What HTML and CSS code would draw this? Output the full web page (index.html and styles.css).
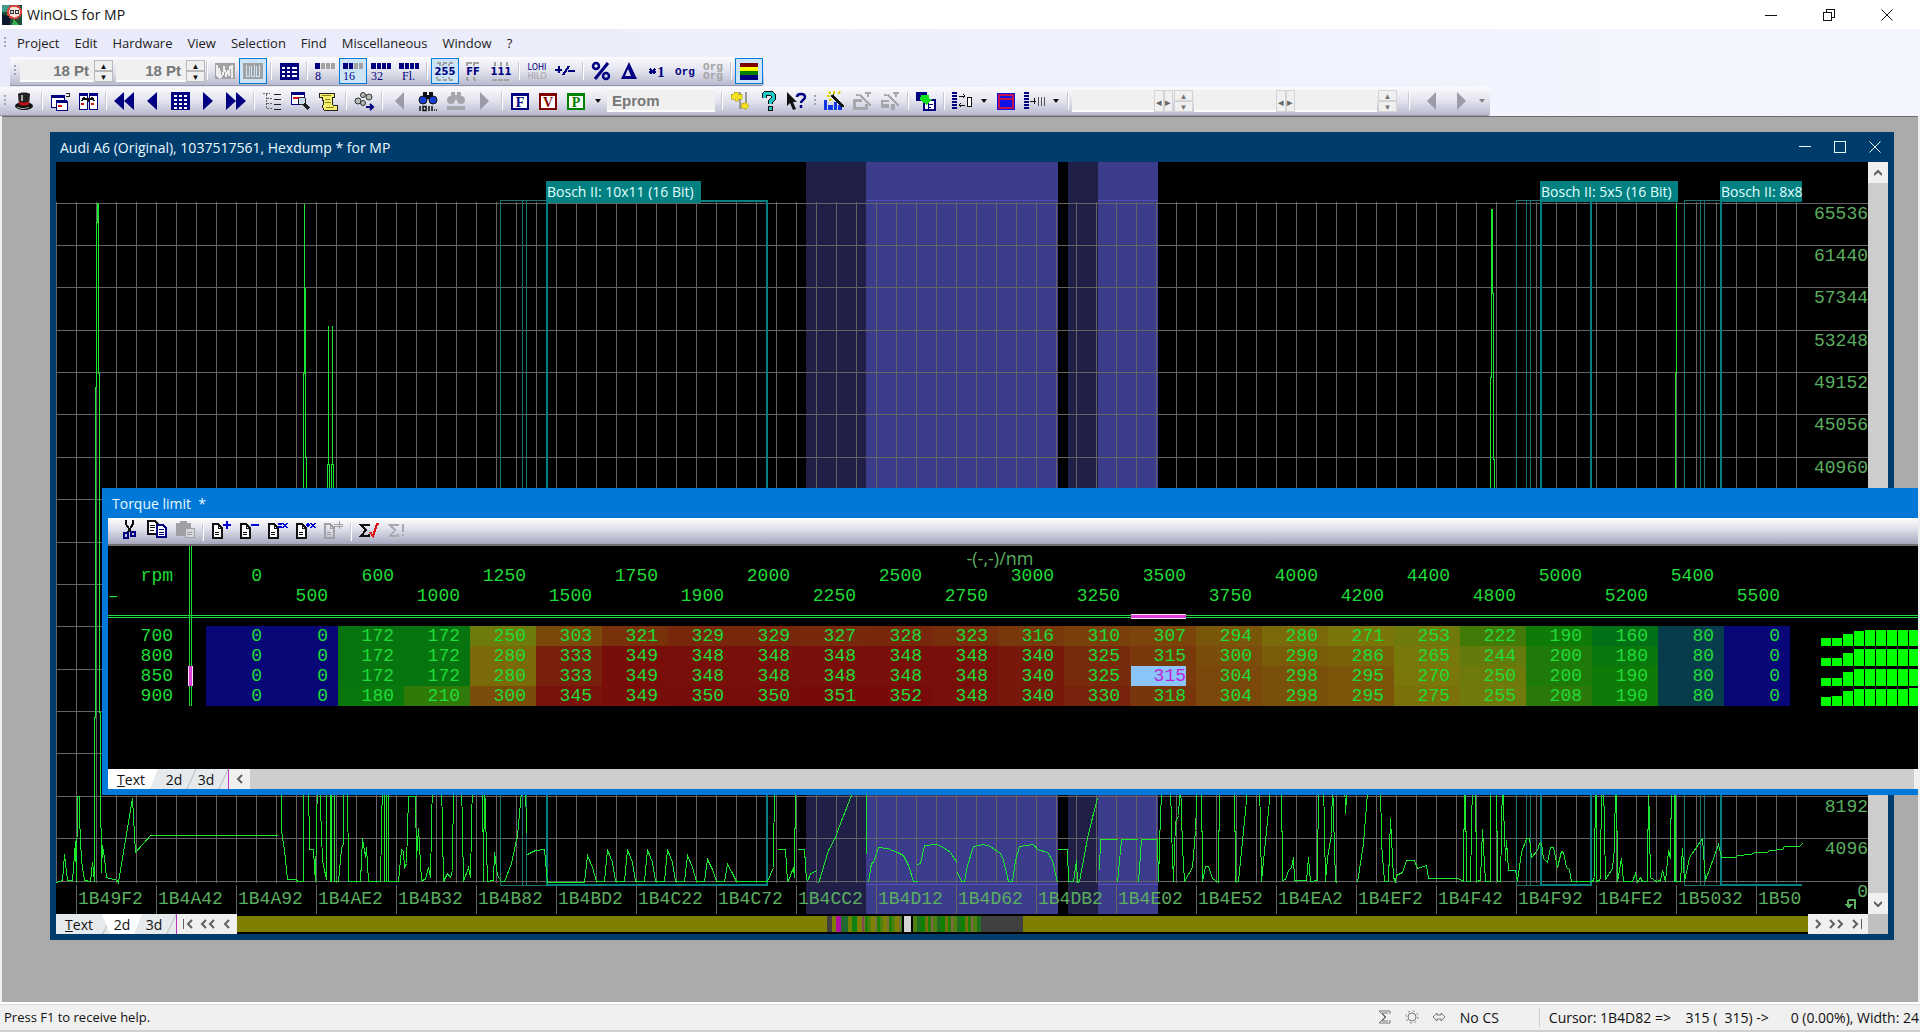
FILE: index.html
```html
<!DOCTYPE html>
<html lang="en">

<head>
    <meta charset="UTF-8">
    <meta name="viewport" content="width=device-width, initial-scale=1.0">
    <title>WinOLS for MP</title>
    <link rel="stylesheet" href="styles.css">
</head>

<body>
    <header class="titlebar">
        <svg class="appicon" viewBox="0 0 20 20">
            <rect width="20" height="20" fill="#1d4f38" />
            <path d="M0 0h8v7H0z" fill="#3f9c8c" />
            <path d="M0 9l8 3v8H0z" fill="#0b1630" />
            <path d="M12 14l5 6h-7z" fill="#39b04a" />
            <circle cx="12.500" cy="7" r="6.500" fill="#f4e4e2" stroke="#d8453e" stroke-width="2" />
            <circle cx="10" cy="7" r="2" fill="none" stroke="#333" />
            <circle cx="15" cy="7" r="2" fill="none" stroke="#333" />
        </svg>
        <h1>WinOLS for MP</h1>
        <div class="winbtns">
            <button aria-label="Minimize"><svg viewBox="0 0 12 12"><path d="M0 6.500h12" /></svg></button>
            <button aria-label="Restore"><svg viewBox="0 0 12 12"><path d="M.5 3.500h8v8h-8zM3.500 3V.5h8v8H9" /></svg></button>
            <button aria-label="Close"><svg class="smooth" viewBox="0 0 12 12"><path d="M.5.5l11 11M11.500.5l-11 11" /></svg></button>
        </div>
    </header>

    <div class="bars">
        <nav class="menu">
            <span class="grip"></span>
            <a href="#">Project</a>
            <a href="#">Edit</a>
            <a href="#">Hardware</a>
            <a href="#">View</a>
            <a href="#">Selection</a>
            <a href="#">Find</a>
            <a href="#">Miscellaneous</a>
            <a href="#">Window</a>
            <a href="#">?</a>
        </nav>

        <div class="toolbar toolbar_view">
            <span class="grip"></span>
            <input class="field pt" type="text" value="18 Pt" aria-label="Font size">
            <span class="spin"><button aria-label="Up">▲</button><button aria-label="Down">▼</button></span>
            <input class="field pt" type="text" value="18 Pt" aria-label="Row size">
            <span class="spin"><button aria-label="Up">▲</button><button aria-label="Down">▼</button></span>
            <i class="sep"></i>
            <button class="tool" aria-label="Wave"><svg viewBox="0 0 20 20"><path d="M0 2h20v16H0z" fill="#a2a2a2" /><path d="M2 4v10l2 2V7l2 9 2-3 1-8 2 10 2-6 1 6 1-9 2-1v12" fill="none" stroke="#eee" stroke-width="1.500" /></svg></button>
            <button class="tool on" aria-label="Bars"><svg viewBox="0 0 20 20"><path d="M0 2h20v16H0z" fill="#a2a2a2" /><path d="M3 4v11h3V5M8 5v10h3V4M13 5v10h3V4" fill="none" stroke="#cce4f7" /></svg></button>
            <i class="sep"></i>
            <button class="tool" aria-label="Table"><svg viewBox="0 0 20 20"><path d="M1 2h19v17H1z" fill="#000080" /><path d="M3 6h3v2H3zm5 0h3v2H8zm5 0h5v2h-5zM3 10h3v2H3zm5 0h3v2H8zm5 0h5v2h-5zM3 14h3v2H3zm5 0h3v2H8zm5 0h5v2h-5z" fill="#fff" /></svg></button>
            <i class="sep"></i>
            <button class="tool" aria-label="8 bit"><svg viewBox="0 0 20 20"><path d="M0 2h5v6H0z" fill="#000080" /><path d="M6 2h4v6H6zm5 0h4v6h-4zm5 0h4v6h-4z" fill="#a2a2a2" /><text x="0" y="19" class="num">8</text></svg></button>
            <button class="tool on" aria-label="16 bit"><svg viewBox="0 0 20 20"><path d="M0 2h5v6H0zm6 0h4v6H6z" fill="#000080" /><path d="M11 2h4v6h-4zm5 0h4v6h-4z" fill="#a2a2a2" /><text x="0" y="19" class="num">16</text></svg></button>
            <button class="tool" aria-label="32 bit"><svg viewBox="0 0 20 20"><path d="M0 2h5v6H0zm6 0h4v6H6zm5 0h4v6h-4zm5 0h4v6h-4z" fill="#000080" /><text x="0" y="19" class="num">32</text></svg></button>
            <button class="tool" aria-label="Float"><svg viewBox="0 0 20 20"><path d="M0 2h5v6H0zm6 0h4v6H6zm5 0h4v6h-4zm5 0h4v6h-4z" fill="#000080" /><text x="3" y="19" class="num">Fl.</text></svg></button>
            <i class="sep"></i>
            <button class="tool on" aria-label="Decimal"><svg viewBox="0 0 20 20"><path d="M2 1.500h4M8 1.500h4M14 1.500h4M2 18.500h4M8 18.500h4M14 18.500h4M5 3v2M8 3v2M14 3v2M2 16v2M8 16v1M14 16v2" stroke="#a2a2a2" stroke-width="2" /><text x="10" y="14" class="big">255</text></svg></button>
            <button class="tool" aria-label="Hexadecimal"><svg viewBox="0 0 20 20"><path d="M4 1.500h5M11 1.500h5M4 18.500h2M11 18.500h2M4 1v4M11 1v4M4 16v3M11 16v3" stroke="#a2a2a2" stroke-width="2" /><text x="10" y="14" class="big">FF</text></svg></button>
            <button class="tool" aria-label="Binary"><svg viewBox="0 0 20 20"><path d="M4 1v4M10 1v4M16 1v4M1 18.500h5M7 18.500h5M13 18.500h5" stroke="#a2a2a2" stroke-width="2" /><text x="10" y="14" class="big">111</text></svg></button>
            <i class="sep"></i>
            <button class="tool" aria-label="Byte order"><svg viewBox="0 0 20 20"><text x="10" y="9" class="tiny">LOHI</text><text x="10" y="18" class="tiny off">HILO</text></svg></button>
            <button class="tool" aria-label="Sign"><svg viewBox="0 0 20 20"><path d="M0 9h7M3.500 5v7M8 14l6-9M13 9.500h7" stroke="#000080" stroke-width="2" /></svg></button>
            <i class="sep"></i>
            <button class="tool" aria-label="Percent"><svg class="smooth" viewBox="0 0 20 20"><path d="M4 18L17 2" stroke="#000080" stroke-width="3" /><circle cx="5" cy="5" r="3" fill="none" stroke="#000080" stroke-width="2.500" /><circle cx="15" cy="15" r="3" fill="none" stroke="#000080" stroke-width="2.500" /></svg></button>
            <button class="tool" aria-label="Difference"><svg class="smooth" viewBox="0 0 20 20"><path d="M10 1l8 17H2zM9 8l-3 7h6z" fill="#000080" fill-rule="evenodd" /></svg></button>
            <button class="tool" aria-label="Factor"><svg viewBox="0 0 20 20"><path d="M3 8l5 5M8 8l-5 5M2 10.500h7" stroke="#000080" stroke-width="2" /><text x="14" y="16" class="one">1</text></svg></button>
            <button class="tool" aria-label="Original"><svg viewBox="0 0 20 20"><text x="10" y="14" class="org">Org</text></svg></button>
            <button class="tool" aria-label="Original compare"><svg viewBox="0 0 20 20"><text x="10" y="9" class="org off">Org</text><text x="10" y="18" class="org off">Org</text></svg></button>
            <i class="sep"></i>
            <button class="tool on" aria-label="Colors"><svg viewBox="0 0 20 20"><path d="M1 2h18v4H1z" fill="#800000" /><path d="M1 6h18v4H1z" fill="#ff0" /><path d="M1 10h18v4H1z" fill="#008000" /><path d="M1 14h18v5H1z" fill="#000080" /></svg></button>
        </div>

        <div class="toolbar toolbar_main">
            <span class="grip"></span>
            <button class="tool" aria-label="Project"><svg class="smooth" viewBox="0 0 20 20"><ellipse cx="10" cy="15" rx="9" ry="4" fill="#111" /><path d="M4 3c2-2 10-2 12 0l-1 11H5z" fill="#222" /><path d="M5 10c3 2 7 2 10 0v3c-3 2-7 2-10 0z" fill="#c01010" /><path d="M7 4h2v6H7z" fill="#aaa" /><path d="M3 16c4 2 8 2 12 0" fill="none" stroke="#aaa" /></svg></button>
            <i class="sep"></i>
            <button class="tool" aria-label="New window"><svg viewBox="0 0 20 20"><path d="M1 5h13v11H1z" fill="#fff" stroke="#000080" /><path d="M1 4h14v3H1z" fill="#000080" /><path d="M6 10h11v9H6z" fill="#fff" stroke="#000080" /><path d="M6 9h11v3H6z" fill="#000080" /><path d="M8 14h4v2H8z" fill="#e01010" /><path d="M16 2h3v3h-3" fill="none" stroke="#222" /></svg></button>
            <button class="tool" aria-label="Tile windows"><svg viewBox="0 0 20 20"><path d="M1 3h8v15H1zM11 3h8v15h-8z" fill="#fff" stroke="#000080" /><path d="M1 2h9v3H1zM11 2h9v3h-9z" fill="#000080" /><path d="M5 8h10M6 6l-2 4M14 6l2 4M10 8v3" stroke="#111" stroke-width="2" /><path d="M3 12h3v2H3zM13 12h3v2h-3z" fill="#e01010" /></svg></button>
            <i class="sep"></i>
            <button class="tool" aria-label="First"><svg class="smooth" viewBox="0 0 20 20"><path d="M10 1v18L0 10zM20 1v18L10 10z" fill="#000080" /></svg></button>
            <button class="tool" aria-label="Previous"><svg class="smooth" viewBox="0 0 20 20"><path d="M15 1v18L5 10z" fill="#000080" /></svg></button>
            <button class="tool" aria-label="List"><svg viewBox="0 0 20 20"><path d="M1 1h19v18H1z" fill="#000080" /><path d="M4 4h3v2H4zm5 0h3v2H9zm5 0h3v2h-3zM4 8h3v2H4zm5 0h3v2H9zm5 0h3v2h-3zM4 12h3v2H4zm5 0h3v2H9zm5 0h3v2h-3zM4 16h3v2H4zm5 0h3v2H9zm5 0h3v2h-3z" fill="#fff" /></svg></button>
            <button class="tool" aria-label="Next"><svg class="smooth" viewBox="0 0 20 20"><path d="M5 1v18l10-9z" fill="#000080" /></svg></button>
            <button class="tool" aria-label="Last"><svg class="smooth" viewBox="0 0 20 20"><path d="M0 1v18l10-9zM10 1v18l10-9z" fill="#000080" /></svg></button>
            <i class="sep"></i>
            <button class="tool" aria-label="Tree"><svg viewBox="0 0 20 20"><path d="M1 2.500h7M4.500 3v15M5 7.500h5M5 12.500h5M5 17.500h5" fill="none" stroke="#666" stroke-dasharray="2 1" /><path d="M12 3.500h7M12 8.500h7M12 13.500h7M12 18.500h7" stroke="#222" stroke-width="1.500" /></svg></button>
            <button class="tool" aria-label="Preview"><svg viewBox="0 0 20 20"><path d="M1 2h13v11H1z" fill="#fff" stroke="#000080" /><path d="M1 1h14v3H1z" fill="#000080" /><path d="M3 6h6v2H3z" fill="#e01010" /><circle cx="12" cy="10" r="4" fill="#cde" stroke="#222" /><path d="M14 13l5 5" stroke="#222" stroke-width="3" /></svg></button>
            <button class="tool" aria-label="Log"><svg viewBox="0 0 20 20"><path d="M1 2h15v4h-2l1 8h4v5H6l-2-4 2-2-2-7H1z" fill="#f4ec6a" stroke="#222" /><path d="M7 8h5M7 11h6M4 4h9M8 16h8" stroke="#8a8420" /></svg></button>
            <i class="sep"></i>
            <button class="tool" aria-label="Connect"><svg class="smooth" viewBox="0 0 20 20"><g fill="#b4bcb4" stroke="#333"><circle cx="4" cy="10" r="3" /><circle cx="9" cy="4" r="2.500" /><circle cx="9" cy="12" r="2.500" /><circle cx="15" cy="6" r="3" /></g><path d="M12 16h7M16 13l3 3-3 3" fill="none" stroke="#000080" stroke-width="2" /></svg></button>
            <i class="sep"></i>
            <button class="tool" aria-label="Find previous"><svg class="smooth" viewBox="0 0 20 20"><path d="M14 1v18L5 10z" fill="#9c9ca8" /></svg></button>
            <button class="tool" aria-label="Find text"><svg class="smooth" viewBox="0 0 20 20"><path d="M5 1h4v6H5zM11 1h4v6h-4zM8 4h4v4H8z" fill="#111" /><circle cx="5" cy="9" r="4" fill="#1840d8" stroke="#111" /><circle cx="15" cy="9" r="4" fill="#1840d8" stroke="#111" /><path d="M2 15v5M5 15.500h3v4H5zM11 15v5M14 15v5M16 19h1M18 19h1" stroke="#111" fill="none" stroke-width="1.500" /></svg></button>
            <button class="tool" aria-label="Find map"><svg class="smooth" viewBox="0 0 20 20"><path d="M5 1h4v6H5zM11 1h4v6h-4zM8 4h4v5H8zM1 15h18v4H1z" fill="#a6a6ae" /><circle cx="5" cy="9" r="4" fill="#a6a6ae" /><circle cx="15" cy="9" r="4" fill="#a6a6ae" /></svg></button>
            <button class="tool" aria-label="Find next"><svg class="smooth" viewBox="0 0 20 20"><path d="M6 1v18l9-9z" fill="#9c9ca8" /></svg></button>
            <i class="sep"></i>
            <button class="tool" aria-label="F window"><svg viewBox="0 0 20 20"><path d="M1 2h18v17H1z" fill="#000080" /><path d="M3 5h14v12H3z" fill="#fff" /><text x="10" y="16" class="let">F</text></svg></button>
            <button class="tool" aria-label="V window"><svg viewBox="0 0 20 20"><path d="M1 2h18v17H1z" fill="#800000" /><path d="M3 5h14v12H3z" fill="#fff" /><text x="10" y="16" class="let red">V</text></svg></button>
            <button class="tool" aria-label="P window"><svg viewBox="0 0 20 20"><path d="M1 2h18v17H1z" fill="#008000" /><path d="M3 5h14v12H3z" fill="#fff" /><text x="10" y="16" class="let green">P</text></svg></button>
            <button class="drop" aria-label="More"></button>
            <input class="field eprom" type="text" value="Eprom" aria-label="Element">
            <i class="sep"></i>
            <button class="tool" aria-label="Transfer"><svg viewBox="0 0 20 20"><path d="M10 1v17M16 1v17" stroke="#999" stroke-width="2" /><path d="M1 3h3V1h4v2h4v5H8v2H5V8H1zM12 12h3v-2l4 5-4 4v-2h-4z" fill="#f4e020" stroke="#9a9000" stroke-width=".5" /></svg></button>
            <button class="tool" aria-label="Help"><svg viewBox="0 0 20 20"><path d="M6 7V4l2-2h5l2 2v4l-3 3v2" fill="none" stroke="#111" stroke-width="5" /><path d="M6 7V4l2-2h5l2 2v4l-3 3v2" fill="none" stroke="#20c8c8" stroke-width="3" /><path d="M10 15h4v4h-4z" fill="#20c8c8" stroke="#111" /></svg></button>
            <button class="tool" aria-label="Context help"><svg class="smooth" viewBox="0 0 20 20"><path d="M1 1l10 10H7l3 7-3 1-3-7-3 3z" fill="#111" /><path d="M11 6c0-4 8-4 8 0 0 3-4 3-4 6M15 14v3" fill="none" stroke="#000080" stroke-width="2.500" /></svg></button>
            <span class="grip"></span>
            <button class="tool" aria-label="Map wizard"><svg viewBox="0 0 20 20"><path d="M0 9h3v10H0zM4 14h5v5H4zM10 11h3v8h-3zM14 14h4v5h-4z" fill="#1038e8" /><path d="M8 4l11 12" stroke="#111" stroke-width="3" /><path d="M5 1l2 2M10 0v3M3 5h3M14 3l2-2M7 8l-2 2" stroke="#e0d000" stroke-width="2" /></svg></button>
            <button class="tool" aria-label="Wizard 2"><svg viewBox="0 0 20 20"><path d="M1 8h9v3H4v5h9v-3h3v6H1z" fill="#a6a6ae" /><path d="M8 4l11 11M13 2h6M16 1v5M4 4h3" stroke="#a6a6ae" stroke-width="2" /></svg></button>
            <button class="tool" aria-label="Wizard 3"><svg viewBox="0 0 20 20"><path d="M1 9h8v2H3v2h6v4H1zM11 13h4v6h-4z" fill="#a6a6ae" /><path d="M8 4l11 11M13 2h6M16 1v5M4 4h3" stroke="#a6a6ae" stroke-width="2" /></svg></button>
            <i class="sep"></i>
            <button class="tool" aria-label="Copy map"><svg viewBox="0 0 20 20"><path d="M0 1h11v9H0z" fill="#000080" /><path d="M8 9h11v10H8z" fill="#fff" stroke="#000080" stroke-width="2" /><path d="M5 4h8v4h3l-5 6-7-5z" fill="#10e020" /><path d="M12 13h5M12 16h3M12 12v6" stroke="#000080" /></svg></button>
            <i class="sep"></i>
            <button class="tool" aria-label="Signature"><svg viewBox="0 0 20 20"><path d="M2.500 1v18" stroke="#000080" stroke-width="5" stroke-dasharray="2 1" /><path d="M7 5h6M11 3l2 2-2 2M7 14h6M9 12l-2 2 2 2" fill="none" stroke="#111" /><path d="M15 6h4v9h-4z" fill="#fff" stroke="#111" /></svg></button>
            <button class="drop" aria-label="More"></button>
            <button class="tool" aria-label="Frame"><svg viewBox="0 0 20 20"><path d="M1 2h18v17H1z" fill="#1010e8" /><path d="M3 4h14v13H3zM3 8h14" fill="none" stroke="#c01050" stroke-width="1.500" /></svg></button>
            <button class="tool" aria-label="Columns"><svg viewBox="0 0 20 20"><path d="M2.500 1v18" stroke="#000080" stroke-width="5" stroke-dasharray="2 1" /><path d="M6 10h6M10 7v6" stroke="#111" /><path d="M14 6v9M17 6v9M20 6v9" stroke="#555" /></svg></button>
            <button class="drop" aria-label="More"></button>
            <i class="sep"></i>
            <input class="field plain" type="text" aria-label="Value 1">
            <span class="pair"><button aria-label="Left">◂</button><button aria-label="Right">▸</button></span>
            <span class="spin grey"><button aria-label="Up">▲</button><button aria-label="Down">▼</button></span>
            <input class="field plain" type="text" aria-label="Value 2">
            <span class="pair"><button aria-label="Left">◂</button><button aria-label="Right">▸</button></span>
            <input class="field plain" type="text" aria-label="Value 3">
            <span class="spin grey"><button aria-label="Up">▲</button><button aria-label="Down">▼</button></span>
            <i class="sep wide"></i>
            <button class="tool" aria-label="Back"><svg class="smooth" viewBox="0 0 20 20"><path d="M14 1v18L5 10z" fill="#9c9ca8" /></svg></button>
            <button class="tool" aria-label="Forward"><svg class="smooth" viewBox="0 0 20 20"><path d="M7 1v18l9-9z" fill="#9c9ca8" /></svg></button>
            <button class="drop grey" aria-label="More"></button>
        </div>
    </div>

    <main class="workspace">
        <!-- hexdump 2d window -->
        <section class="win win_hex">
            <div class="win_title">
                <h2>Audi A6 (Original), 1037517561, Hexdump * for MP</h2>
                <div class="winbtns">
                    <button aria-label="Minimize"><svg viewBox="0 0 12 12"><path d="M0 5.500h12" /></svg></button>
                    <button aria-label="Maximize"><svg viewBox="0 0 12 12"><path d="M.5.5h11v11H.5z" /></svg></button>
                    <button aria-label="Close"><svg class="smooth" viewBox="0 0 12 12"><path d="M.5.5l11 11M11.500.5l-11 11" /></svg></button>
                </div>
            </div>
            <div class="hex_body">
                <div class="chart">
                    <svg class="plot" viewBox="56 162 1812 752">
                        <path class="band_dim" d="M806 162h60v752h-60zM1068 162h30v752h-30z" />
                        <path class="band" d="M866 162h192v752h-192zM1098 162h60v752h-60z" />
                        <path class="band_line" d="M866 200.500h192M1098 200.500h60M866 884.500h192M1098 884.500h60" />
                        <g class="grid"></g>
                        <path class="map_thin" d="M546 200.500H500.500V885.500H546M522.500 200V885M526.500 200V885M1540 200.500H1516.500V885.500H1540M1526.500 200V885M1530.500 200V885M1720 200.500H1684.500V885.500H1720M1700.500 200V885M1704.500 200V885" />
                        <path class="map_thick" d="M547 201H767V885H547zM1541 201H1591V885H1541zM1802 201H1721V885H1802" />
                        <g transform="translate(.5 .5)">
                            <path class="trace" d="M56 882L62 880 64 854 67 880H72L75 841 76 881 77 796H79V817L81 860 84 880 90 881 92 862 94 881V717H95V387H96V222H97V203H98V373H99V712H100V780L101 872 102 845 104 858 106 877 117 880 118 882 132 798 135 852 150 835H277
M281 780V830L284 850 287 879H296L297 881H303V373H304V203M304 288H305V457H306V780M308 780L309 849H313L314 867 315 881 317 780M319 780L322 860 326 879V780M330 780V881H331V780M334 780V881H338L341 848 343 843V780M347 780L348 881H360L362 838 365 857 366 847 368 881H380L382 780M384 780V881H386V780M388 780V881H398L401 849 403 851 404 867 406 863 408 796H415L416 858 418 828 421 880 425 879 428 867 430 877 432 780M441 780L443 881 447 873 450 877 452 870 453 780M461 780L463 881 468 867 470 877 472 780M482 780L483 881 484 780 487 881 493 880 494 852 497 875 501 881H504L511 863 517 835 522 780M525 780L526 833M527 854L535 850 544 849 546 872 547 882H584L587 855 592 867 596 881H604L607 849 612 862 615 881H624L627 849 632 862 635 881H644L647 849 652 862 655 881H664L667 849 672 862 675 881H684L687 855 692 867 696 881H704L707 859 712 869 716 881H724L727 864 732 873 736 881H767L773 867 774 780M777 849H785L787 881 789 878 793 867 794 877 795 780M797 849H804L806 880M807 881L810 873 817 870M818 883L828 850 835 837 838 828 851 795M866 780V853M868 882L871 863 873 862 878 847 887 848 897 852 903 855 908 865 913 881H917M917 864L920 863 924 845 936 844 943 847 950 852 957 863M957 872L961 881H964L967 865 973 846 983 844 990 846 1000 853 1003 860 1008 881H1012L1015 860 1019 846 1033 844 1037 849 1047 852 1052 860 1057 882M1057 849H1067L1068 881H1073L1076 860 1077 882 1079 881 1087 838 1092 817 1097 798M1099 870L1100 839H1117M1117 882L1121 839H1137M1138 882L1141 839H1157L1158 881 1160 813 1162 780M1170 780L1171 830 1173 881 1175 822 1178 815 1180 780 1182 847 1184 881 1192 867 1195 830 1197 780M1201 780L1202 881 1205 866H1208L1212 878 1218 882 1219 780M1234 780L1235 881H1238L1248 780M1259 780L1261 881 1271 780M1281 780L1282 880 1285 879 1288 870 1291 867 1293 857 1294 880H1306L1308 857 1310 881 1317 880 1318 780M1323 780L1325 881 1327 858 1331 833 1332 780 1335 881 1337 882M1344 780L1345 813 1347 780M1357 882L1363 843 1368 780M1380 780L1381 843 1384 881H1388L1390 818 1393 877 1395 881 1396 875 1402 872 1406 860H1414L1417 868 1426 865 1428 878H1458L1463 881 1464 780M1465 780L1466 881H1470L1472 780M1475 780L1476 881 1480 880 1482 829 1485 881H1490V377H1491V209H1492V293H1493V459H1494V780M1496 780L1497 881H1500L1502 780 1505 860 1506 840 1508 870H1515L1517 881 1518 873 1521 852 1526 838H1529L1531 857 1537 850 1539 843H1541L1543 858 1547 862 1550 847H1553L1557 867 1561 851 1563 852 1566 867 1569 869 1571 881H1592L1594 877 1595 780M1596 780V881L1600 879 1601 780M1603 780L1605 879 1612 868 1614 847 1615 780M1616 780L1617 881 1621 858 1623 881H1632L1635 873 1637 882 1640 877 1642 881H1647L1648 780 1650 877 1656 881 1660 880 1662 870 1665 881 1668 850 1670 858 1671 780M1674 780V881H1675V373H1676V203M1675 881H1680L1682 848 1684 881 1687 867 1689 857 1702 838 1705 880 1718 844 1721 857H1735L1737 855 1751 854 1754 852H1767L1769 850 1782 849 1784 846H1799L1802 843" />
                            <path class="trace" d="M327 490V464H328V325M328 464H329V490M331 490V464H332V325M332 464H333V490" />
                        </g>
                        <path class="map_label" d="M546 181h155v22H546zM1540 181h138v21h-138zM1720 181h82v21h-82z" />
                        <text class="map_text" x="547" y="197">Bosch II: 10x11 (16 Bit)</text>
                        <text class="map_text" x="1541" y="197">Bosch II: 5x5 (16 Bit)</text>
                        <text class="map_text" x="1721" y="197">Bosch II: 8x8</text>
                        <g class="axis"></g>
                        <path class="loop" d="M1848 900h7v9M1848 900v7" />
                        <path class="loop_head" d="M1844 904h9l-4 5z" />
                    </svg>
                </div>
                <div class="vscroll">
                    <button aria-label="Scroll up"><svg viewBox="0 0 8 8"><path d="M0 6l4-4 4 4" /></svg></button>
                    <button aria-label="Scroll down"><svg viewBox="0 0 8 8"><path d="M0 2l4 4 4-4" /></svg></button>
                </div>
            </div>
            <div class="foot">
                <div class="tabs">
                    <button class="tab first"><u>T</u>ext</button>
                    <button class="tab mid active">2d</button>
                    <button class="tab">3d</button>
                </div>
                <div class="jump left">
                    <button aria-label="Start"><svg viewBox="0 0 11 10"><path class="bar" d="M.5 0v10" /><path d="M9 1L5 5l4 4" /></svg></button>
                    <button aria-label="Page back"><svg viewBox="0 0 16 10"><path d="M6 1L2 5l4 4M14 1l-4 4 4 4" /></svg></button>
                    <button aria-label="Back"><svg viewBox="0 0 8 10"><path d="M6 1L2 5l4 4" /></svg></button>
                </div>
                <div class="overview">
                    <i class="olive o1"></i><i class="dark d1"></i><i class="code c1"></i><i class="thumb"></i><i class="code c2"></i><i class="dark d2"></i><i class="olive o2"></i>
                </div>
                <div class="jump right">
                    <button aria-label="Forward"><svg viewBox="0 0 8 10"><path d="M2 1l4 4-4 4" /></svg></button>
                    <button aria-label="Page forward"><svg viewBox="0 0 16 10"><path d="M2 1l4 4-4 4M10 1l4 4-4 4" /></svg></button>
                    <button aria-label="End"><svg viewBox="0 0 11 10"><path class="bar" d="M10.500 0v10" /><path d="M2 1l4 4-4 4" /></svg></button>
                </div>
                <span class="corner"></span>
            </div>
        </section>

        <!-- torque limit map window -->
        <section class="win win_map">
            <div class="win_title">
                <h2>Torque limit&nbsp; *</h2>
            </div>
            <div class="map_tools">
                <button class="tool" aria-label="Cut"><svg viewBox="0 0 20 20"><path d="M7 0v4l5 8M14 0v4L9 12" fill="none" stroke="#111" stroke-width="2" /><path d="M5 13h4v5H5zM12 12h4v4h-4z" fill="none" stroke="#000080" stroke-width="1.500" /></svg></button>
                <button class="tool" aria-label="Copy"><svg viewBox="0 0 20 20"><path d="M1 1h7l3 3v10H1z" fill="#fff" stroke="#111" stroke-width="1.500" /><path d="M3 5h5M3 7h5M3 10h4" stroke="#111" /><path d="M10 5h6l3 3v9h-9z" fill="#fff" stroke="#000080" stroke-width="1.500" /><path d="M12 9h5M12 12h5M12 14h5" stroke="#000080" /></svg></button>
                <button class="tool" aria-label="Paste"><svg viewBox="0 0 20 20"><path d="M1 3h4V1h7v2h4v13H1z" fill="#a0a0a4" /><path d="M10 8h9v9h-9z" fill="#d8d8dc" stroke="#a0a0a4" /><path d="M12 12h5M12 14h5" stroke="#a0a0a4" /></svg></button>
                <i class="sep"></i>
                <button class="tool" aria-label="Add"><svg viewBox="0 0 20 20"><path d="M2 4h5l4 4v10H2z" fill="#fff" stroke="#111" stroke-width="1.500" /><path d="M7 4v4h4M4 12h4M4 14h4" fill="none" stroke="#111" /><path d="M12 5h8M16 1v8" stroke="#0000d8" stroke-width="2" /></svg></button>
                <button class="tool" aria-label="Subtract"><svg viewBox="0 0 20 20"><path d="M2 4h5l4 4v10H2z" fill="#fff" stroke="#111" stroke-width="1.500" /><path d="M7 4v4h4M4 12h4M4 14h4" fill="none" stroke="#111" /><path d="M12 5h8" stroke="#0000d8" stroke-width="2" /></svg></button>
                <button class="tool" aria-label="Set"><svg viewBox="0 0 20 20"><path d="M2 4h5l4 4v10H2z" fill="#fff" stroke="#111" stroke-width="1.500" /><path d="M7 4v4h4M4 12h4M4 14h4" fill="none" stroke="#111" /><path d="M11 4h4M11 7h4M16 3l4 5M20 3l-4 5" stroke="#0000d8" stroke-width="1.500" /></svg></button>
                <button class="tool" aria-label="Change"><svg viewBox="0 0 20 20"><path d="M2 4h5l4 4v10H2z" fill="#fff" stroke="#111" stroke-width="1.500" /><path d="M7 4v4h4M4 12h4M4 14h4" fill="none" stroke="#111" /><path d="M11 5h4M13 3v4M16 3l4 5M20 3l-4 5" stroke="#0000d8" stroke-width="1.500" /></svg></button>
                <button class="tool" aria-label="Interpolate"><svg viewBox="0 0 20 20"><path d="M2 4h5l4 4v10H2z" fill="none" stroke="#a0a0a4" stroke-width="1.500" /><path d="M7 4v4h4M4 12h4M4 14h4M11 4h9M11 6h9M16 1v8" fill="none" stroke="#a0a0a4" /></svg></button>
                <i class="sep"></i>
                <button class="tool" aria-label="Checksum"><svg viewBox="0 0 20 20"><path d="M10 6V5H2l5 5-5 6h8v-2" fill="none" stroke="#111" stroke-width="2" /><path d="M11 12l3 4 4-12h2" fill="none" stroke="#e01010" stroke-width="2" /></svg></button>
                <button class="tool" aria-label="Checksum warning"><svg viewBox="0 0 20 20"><path d="M11 6V5H3l5 5-5 6h8v-2M16 4v8M16 14v2" fill="none" stroke="#a8a8b0" stroke-width="1.500" /></svg></button>
            </div>
            <div class="map_body">
                <div class="unit">-(-,-)/nm</div>
                <table class="map"></table>
                <i class="line_h"></i>
                <i class="line_v"></i>
                <i class="mark_h"></i>
                <i class="mark_v"></i>
            </div>
            <div class="foot">
                <div class="tabs">
                    <button class="tab active first"><u>T</u>ext</button>
                    <button class="tab">2d</button>
                    <button class="tab">3d</button>
                </div>
                <div class="hscroll">
                    <button aria-label="Scroll left"><svg viewBox="0 0 8 10"><path d="M6 1L2 5l4 4" /></svg></button>
                </div>
            </div>
        </section>
    </main>

    <footer class="status">
        <span class="hint">Press F1 to receive help.</span>
        <svg class="st_icon" viewBox="0 0 14 14"><path d="M12 4V1H1l6 6-6 6h11v-3M10 3H4l4 4-4 4h6" /></svg>
        <svg class="st_icon" viewBox="0 0 14 14"><circle cx="7" cy="7" r="4" /><circle cx="7" cy="7" r="6" stroke-dasharray="2 2.700" /></svg>
        <svg class="st_icon" viewBox="0 0 14 14"><path d="M1 7l4-4v2h4V3l4 4-4 4V9H5v2z" /></svg>
        <span class="cs">No CS</span>
        <span class="cursor">Cursor: 1B4D82 =&gt;    315 (  315) -&gt;      0 (0.00%), Width: 24</span>
    </footer>

    <script>
        var rpm = [0, 500, 600, 1000, 1250, 1500, 1750, 1900, 2000, 2250, 2500, 2750, 3000, 3250, 3500, 3750, 4000, 4200, 4400, 4800, 5000, 5200, 5400, 5500];
        var rows = [
            { "name": 700, "bars": [8, 8, 12, 15, 16, 16, 16, 16, 16], "data": [0, 0, 172, 172, 250, 303, 321, 329, 329, 327, 328, 323, 316, 310, 307, 294, 280, 271, 253, 222, 190, 160, 80, 0] },
            { "name": 800, "bars": [8, 8, 13, 17, 17, 17, 17, 17, 17], "data": [0, 0, 172, 172, 280, 333, 349, 348, 348, 348, 348, 348, 340, 325, 315, 300, 290, 286, 265, 244, 200, 180, 80, 0] },
            { "name": 850, "bars": [8, 8, 14, 17, 17, 17, 17, 17, 17], "data": [0, 0, 172, 172, 280, 333, 349, 348, 348, 348, 348, 348, 340, 325, 315, 304, 298, 295, 270, 250, 200, 190, 80, 0] },
            { "name": 900, "bars": [9, 10, 15, 17, 17, 17, 17, 17, 18], "data": [0, 0, 180, 210, 300, 345, 349, 350, 350, 351, 352, 348, 340, 330, 318, 304, 298, 295, 275, 255, 208, 190, 80, 0] }
        ];
        // value -> cell color
        var stops = [
            [0, 7, 7, 120], [80, 6, 60, 76], [160, 2, 112, 22], [190, 14, 122, 8], [222, 66, 122, 10],
            [250, 110, 122, 12], [270, 122, 120, 10], [300, 122, 78, 10], [333, 120, 32, 12], [352, 120, 10, 10]
        ];

        function heat(v) {
            for (var i = 1; i < stops.length; i++) {
                if (v <= stops[i][0]) {
                    var a = stops[i - 1], b = stops[i];
                    var t = (v - a[0]) / (b[0] - a[0]);
                    var c = [1, 2, 3].map(function (n) { return Math.round(a[n] + (b[n] - a[n]) * t); });
                    return 'rgb(' + c.join(',') + ')';
                }
            }
        }

        var html = '<thead><tr><th>rpm</th>';
        for (var i = 0; i < rpm.length; i++) {
            html += `<th>${i % 2 ? '' : rpm[i]}</th>`;
        }
        html += '</tr><tr><th class="dash">–</th>';
        for (var i = 0; i < rpm.length; i++) {
            html += `<th>${i % 2 ? rpm[i] : ''}</th>`;
        }
        html += '</tr></thead><tbody>';
        for (var r = 0; r < rows.length; r++) {
            html += `<tr><th>${rows[r].name}</th>`;
            for (var i = 0; i < rows[r].data.length; i++) {
                var v = rows[r].data[i];
                var sel = r == 2 && i == 14;
                html += `<td style="background:${heat(v)}">${sel ? '<span class="sel">' + v + '</span>' : v}</td>`;
            }
            html += '<td class="bars_cell"><div>';
            for (var b of rows[r].bars) {
                html += `<i style="height:${b}px"></i>`;
            }
            html += '</div></td></tr>';
        }
        document.querySelector('.map').innerHTML = html + '</tbody>';

        // grid and axis labels of the 2d view, rows hidden by the map window get no label
        var grid = '', axis = '';
        for (var x = 56; x <= 1796; x += 20) {
            grid += `<path d="M${x}.5 202V883"/>`;
        }
        for (var n = 0; n <= 16; n++) {
            var y = Math.floor(203 + n * 42.375);
            grid += `<path d="M56 ${y}.5H1868"/>`;
            if (n < 7 || n > 13) {
                axis += `<text x="1868" y="${y + 16}" text-anchor="end">${65536 - n * 4096}</text>`;
            }
        }
        for (var k = 0; k < 22; k++) {
            var label = (0x1B49F2 + k * 0x50).toString(16).toUpperCase();
            grid += `<path d="M${76 + k * 80}.5 885V914"/>`;
            axis += `<text x="${78 + k * 80}" y="904">${k == 21 ? label.slice(0, 4) : label}</text>`;
        }
        document.querySelector('.grid').innerHTML = grid;
        document.querySelector('.axis').innerHTML = axis;
    </script>
</body>

</html>
```

FILE: styles.css
```css
* {
    box-sizing: border-box;
}

body {
    margin: 0;
    height: 100vh;
    display: flex;
    flex-direction: column;
    overflow: hidden;
    font-family: "Open Sans", "Noto Sans", sans-serif;
    font-size: 14px;
    color: #111;
    background: #f0f0f0;
}

button {
    padding: 0;
    border: 0;
    background: none;
    font: inherit;
    color: inherit;
}

svg {
    display: block;
    shape-rendering: crispEdges;
}

svg.smooth {
    shape-rendering: auto;
}

h1,
h2 {
    margin: 0;
    flex: 1;
    font-size: 14px;
    font-weight: 400;
}

/* title bar */
.titlebar {
    display: flex;
    align-items: center;
    height: 29px;
    padding: 0 4px 0 2px;
    background: #fff;
}

.appicon {
    width: 20px;
    height: 20px;
    margin-right: 5px;
}

.winbtns {
    display: flex;
}

.winbtns button {
    display: flex;
    justify-content: center;
    width: 58px;
}

.winbtns svg {
    width: 12px;
    height: 12px;
    fill: none;
    stroke: currentColor;
}

/* menu + toolbars */
.bars {
    background: linear-gradient(to right, #e9eafa, #f4f6ff);
}

.menu {
    display: flex;
    align-items: center;
    gap: 15px;
    height: 28px;
    font-size: 13px;
}

.menu a {
    color: #222;
    text-decoration: none;
}

.menu .grip {
    margin: 0 -4px 0 4px;
}

.grip {
    flex: none;
    width: 2px;
    height: 12px;
    margin: 0 4px;
    background: repeating-linear-gradient(#a4a6b4 0 2px, transparent 2px 4px);
}

.toolbar {
    display: flex;
    align-items: center;
    width: max-content;
    height: 29px;
    background: linear-gradient(#fbfbfe, #e2e3ee 50%, #b9bace);
    border-bottom: 1px solid #9496a8;
    border-radius: 0 0 3px 0;
}

.toolbar_view {
    margin-left: 10px;
    padding-right: 1px;
}

.toolbar_main {
    margin-top: 1px;
}

.toolbar_main .grip:first-child {
    margin-left: 4px;
}

.tool {
    display: flex;
    align-items: center;
    justify-content: center;
    flex: none;
    width: 28px;
    height: 26px;
}

.tool svg {
    flex: none;
    width: 20px;
    height: 20px;
    overflow: visible;
}

.tool.on {
    background: #cce4f7;
    border: 1px solid #0078d7;
}

.sep {
    flex: none;
    width: 2px;
    height: 18px;
    margin: 0 3px;
    background: #c6c7d6;
    border-right: 1px solid #fff;
}

.sep.wide {
    margin: 0 8px 0 10px;
}

.field {
    height: 22px;
    border: 0;
    border-bottom: 2px solid #fff;
    padding: 0 5px;
    background: #f0f0f0;
    color: #777;
    font: bold 15px "Liberation Sans", Arial, sans-serif;
}

.pt {
    width: 74px;
    text-align: right;
}

.spin + .pt {
    margin-left: 3px;
    width: 70px;
}

.spin + .sep {
    margin-left: 1px;
}

.spin + .sep.wide {
    margin-left: 10px;
}

.eprom {
    width: 108px;
    margin: 0 3px 0 1px;
}

.plain {
    width: 82px;
}

.spin {
    display: flex;
    flex-direction: column;
    width: 19px;
    height: 22px;
}

.spin button {
    flex: 1;
    height: 10px;
    border: 1px solid #b8b8b8;
    background: #f0f0f0;
    font-size: 8px;
    line-height: 9px;
    color: #111;
}

.spin.grey {
    margin: 0 1px;
}

.spin.grey button {
    color: #777;
    border-color: #d4d4d4;
}

.pair {
    display: flex;
    width: 19px;
    height: 22px;
}

.pair button {
    flex: 1;
    border: 1px solid #d4d4d4;
    background: #f0f0f0;
    color: #666;
    font-size: 11px;
}

.drop {
    width: 16px;
    height: 20px;
}

.drop::before {
    content: "";
    display: block;
    margin: 0 auto;
    width: 0;
    border: 3px solid transparent;
    border-top: 4px solid #111;
    border-bottom: 0;
}

.drop.grey::before {
    border-top-color: #888;
}

.tool text {
    text-anchor: middle;
    font-family: "DejaVu Sans", sans-serif;
    fill: #000080;
}

.tool .num {
    text-anchor: start;
    font: 12px "Liberation Serif", serif;
}

.tool .big {
    font-size: 10px;
    font-weight: bold;
}

.tool .one {
    font: bold 15px "Liberation Serif", serif;
}

.tool .tiny {
    font-size: 8px;
}

.tool .org {
    font: bold 11px "Liberation Mono", monospace;
}

.tool .off {
    fill: #a2a2a2;
}

.tool .let {
    font: bold 14px "Liberation Serif", serif;
}

.tool .red {
    fill: #800000;
}

.tool .green {
    fill: #008000;
}

/* mdi area */
.workspace {
    flex: 1;
    min-height: 0;
    position: relative;
    overflow: hidden;
    border: 0 solid #f0f0f0;
    border-width: 0 2px;
    background: #ababab;
    box-shadow: inset 0 1px #6c6c70;
}

.win {
    position: absolute;
    display: flex;
    flex-direction: column;
}

.win_hex {
    left: 48px;
    right: 24px;
    top: 16px;
    bottom: 62px;
    border: 6px solid #003c6b;
    border-top: 0;
}

.win_map {
    left: 100px;
    right: 0;
    top: 372px;
    border: 6px solid #0078d7;
    border-width: 0 0 6px 6px;
}

.win_title {
    display: flex;
    align-items: center;
    flex: none;
    height: 30px;
    padding-left: 4px;
    color: #e8f8ff;
    background: #003c6b;
}

.win_map .win_title {
    background: #0078d7;
}

.win_title .winbtns {
    margin-right: -4px;
}

.win_title .winbtns button {
    width: 35px;
}

.hex_body {
    display: flex;
    flex: 1;
    min-height: 0;
}

.chart {
    flex: 1;
    min-width: 0;
    overflow: hidden;
    background: #000;
}

.plot {
    width: 1812px;
    height: 752px;
}

.grid {
    stroke: #646464;
}

.band_dim {
    fill: #1f1f47;
}

.band {
    fill: #3c3c8c;
}

.band_line {
    stroke: #5050b8;
}

.map_thin {
    fill: none;
    stroke: #1a7370;
}

.map_thick {
    fill: none;
    stroke: #008080;
    stroke-width: 2;
}

.trace {
    fill: none;
    stroke: #1ce830;
}

.map_label {
    fill: #008080;
}

.map_text {
    font-size: 14px;
    fill: #e4ffff;
}

.axis text {
    font: 18px "Liberation Mono", monospace;
    fill: #5cae60;
}

.loop {
    fill: none;
    stroke: #5cae60;
    stroke-width: 2;
}

.loop_head {
    fill: #5cae60;
}

.vscroll {
    display: flex;
    flex-direction: column;
    justify-content: space-between;
    flex: none;
    width: 20px;
    background: #cdcdcd;
}

.vscroll button {
    display: flex;
    align-items: center;
    justify-content: center;
    height: 21px;
    background: #f0f0f0;
}

.vscroll svg,
.foot svg {
    height: 10px;
    fill: none;
    stroke: #606060;
    stroke-width: 2;
    shape-rendering: auto;
}

.vscroll svg {
    width: 8px;
}

.foot .bar {
    stroke-width: 1;
}

/* tabs and bottom scroll line */
.foot {
    display: flex;
    flex: none;
    height: 20px;
    background: #000;
}

.win_map .foot {
    background: #f0f0f0;
}

.tabs {
    display: flex;
    padding-right: 6px;
    background: #e6eaec;
    border-right: 1px solid #c030c0;
}

.tab {
    position: relative;
    width: 32px;
    line-height: 19px;
    text-align: center;
}

.tab.first {
    width: 50px;
    padding-right: 4px;
}

.tab::after {
    content: "";
    position: absolute;
    right: -2px;
    top: 0;
    height: 20px;
    border-right: 1px solid #b4bcc0;
    transform: skewX(-25deg);
}

.tab.active {
    background: #fff;
    clip-path: polygon(0 0, 100% 0, calc(100% - 8px) 100%, 0 100%);
}

.tab.mid {
    width: 40px;
    margin: 0 -4px;
}

.tab.mid.active {
    clip-path: polygon(0 0, 100% 0, calc(100% - 8px) 100%, 8px 100%);
}

.jump {
    display: flex;
    align-items: center;
    justify-content: space-around;
    width: 60px;
    padding: 0 3px;
    background: #f0f0f0;
}

.overview {
    display: flex;
    flex: 1;
    padding: 2px 0;
}

.overview i {
    flex-basis: 0;
}

.olive {
    background: #808000;
}

.o1 {
    flex-grow: 590;
}

.o2 {
    flex-grow: 785;
}

.dark {
    background: #404040;
}

.d1 {
    flex-grow: 5;
}

.d2 {
    flex-grow: 42;
}

.c1 {
    flex-grow: 70;
    background: linear-gradient(to right, #808000 4px, #b010a0 4px 9px, #206a30 9px 16px, #708000 16px 20px, #108010 20px 25px, #808000 25px 30px, #804850 30px 32px, transparent 32px), repeating-linear-gradient(to right, #508010 0 3px, #808000 3px 7px, #7a7040 7px 9px, #208000 9px 12px);
}

.thumb {
    flex-grow: 7;
    margin: 0 2px;
    background: #d4d4d4;
}

.c2 {
    flex-grow: 68;
    background: repeating-linear-gradient(to right, #508010 0 4px, #207020 4px 8px, #108000 8px 12px, #707010 12px 15px, #208000 15px 18px, #806848 18px 20px);
}

.corner {
    width: 20px;
    background: #c0c0c0;
}

/* map window */
.map_tools {
    display: flex;
    flex: none;
    height: 28px;
    padding-left: 7px;
    background: linear-gradient(#fff, #dddeea 45%, #a6a7bd);
    border-bottom: 2px solid #6e6e70;
}

.map_tools .tool {
    height: 24px;
}

.map_tools .sep {
    margin-top: 5px;
}

.map_body {
    position: relative;
    height: 223px;
    overflow: hidden;
    background: #000;
    font: 18px/20px "Liberation Mono", monospace;
    color: #20dc38;
}

.unit {
    height: 20px;
    padding-right: 26px;
    text-align: center;
    font: 18px/25px "Open Sans", "Noto Sans", sans-serif;
    color: #5cae60;
}

.map {
    width: 1814px;
    table-layout: fixed;
    border-spacing: 0;
}

.map th,
.map td {
    width: 66px;
    height: 20px;
    padding: 0 10px 0 0;
    text-align: right;
    font-weight: 400;
}

.map th:first-child {
    width: 98px;
    padding-right: 33px;
}

.map th.dash {
    text-align: left;
}

.map tbody::before {
    content: "";
    display: block;
    height: 20px;
}

.sel {
    display: block;
    margin-left: 1px;
    background: #8ac4f8;
    color: #c020d8;
}

.map .bars_cell {
    width: 132px;
    padding: 0 0 0 31px;
}

.bars_cell div {
    display: flex;
    align-items: flex-end;
    gap: 1px;
    height: 20px;
}

.bars_cell i {
    flex: none;
    width: 10px;
    background: #0f0;
}

/* cursor rulers over the table */
.line_h,
.line_v,
.mark_h,
.mark_v {
    position: absolute;
}

.line_h {
    left: 0;
    right: 0;
    top: 69px;
    height: 3px;
    border: 1px solid #20dc38;
    border-width: 1px 0;
}

.line_v {
    left: 81px;
    top: 0;
    width: 3px;
    height: 160px;
    border: 1px solid #20dc38;
    border-width: 0 1px;
}

.mark_h {
    left: 1023px;
    top: 68px;
    width: 55px;
    height: 5px;
    background: #d840d8;
    border: 1px solid #fce0fc;
    border-width: 1px 0;
}

.mark_v {
    left: 80px;
    top: 120px;
    width: 5px;
    height: 20px;
    background: #d840d8;
    border: 1px solid #fce0fc;
    border-width: 0 1px;
}

.hscroll {
    flex: 1;
    margin-right: 4px;
    background: #cdcdcd;
}

.hscroll button {
    display: flex;
    align-items: center;
    justify-content: center;
    width: 21px;
    height: 20px;
    background: #f0f0f0;
}

/* status bar */
.status {
    display: flex;
    align-items: center;
    flex: none;
    height: 30px;
    padding: 0 1px 0 4px;
    border-top: 2px solid #fff;
    border-bottom: 2px solid #d0d0d0;
    box-shadow: inset 0 1px #d8d8d8;
    white-space: pre;
}

.hint {
    flex: 1;
    font-size: 13px;
}

.st_icon {
    width: 14px;
    height: 14px;
    margin-right: 13px;
    fill: none;
    stroke: #777;
    shape-rendering: auto;
}

.cs {
    width: 80px;
    padding-left: 1px;
}

.cursor {
    padding-left: 9px;
    border-left: 1px solid #d0d0d0;
}
```
